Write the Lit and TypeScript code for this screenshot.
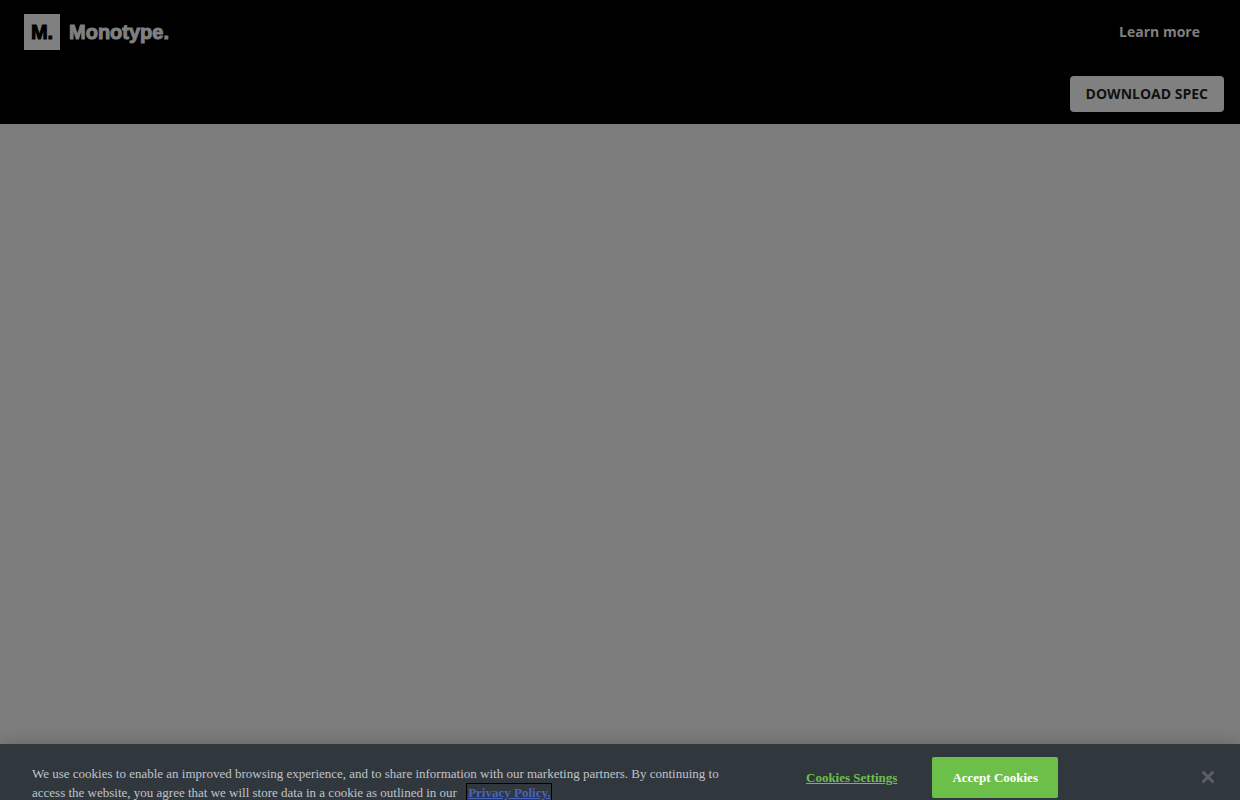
import { LitElement, html, css } from "lit";
import { customElement } from "lit/decorators.js";

@customElement("site-header")
class SiteHeader extends LitElement {
  static styles = css`
    :host {
      display: block;
      background: #000;
      color: #808080;
      font: 700 14px/20px "Open Sans", sans-serif;
    }
    .bar {
      display: flex;
      align-items: center;
      justify-content: space-between;
      height: 64px;
      padding: 0 40px 0 24px;
    }
    .logo {
      display: flex;
      align-items: center;
      gap: 9px;
      color: inherit;
      text-decoration: none;
      font: 700 20px/36px "Liberation Sans", sans-serif;
    }
    .mark {
      width: 36px;
      height: 36px;
      background: #808080;
      color: #000;
      text-align: center;
    }
    .logo span {
      -webkit-text-stroke: 1px currentColor;
    }
    .learn {
      color: inherit;
      text-decoration: none;
    }
    .actions {
      display: flex;
      justify-content: flex-end;
      padding: 12px 16px;
    }
    .download {
      height: 36px;
      padding: 0 16px;
      border: 0;
      border-radius: 4px;
      background: #808080;
      color: #111;
      font: inherit;
    }
  `;

  render() {
    return html`
      <header>
        <nav class="bar">
          <a class="logo" href="#"><span class="mark">M.</span><span>Monotype.</span></a>
          <a class="learn" href="#">Learn more</a>
        </nav>
        <div class="actions"><button class="download">DOWNLOAD SPEC</button></div>
      </header>
    `;
  }
}

@customElement("cookie-banner")
class CookieBanner extends LitElement {
  static styles = css`
    :host {
      display: block;
      background: #30373d;
      box-shadow: 0 0 18px rgba(0, 0, 0, 0.2);
      font: 13px/19px "Liberation Serif", serif;
      color: #c0c4cb;
    }
    .row {
      display: grid;
      grid-template-columns: minmax(0, 704px) auto 1fr;
      align-items: start;
      padding: 0 24px 0 32px;
    }
    p {
      margin: 0;
      padding-top: 20px;
    }
    .policy {
      margin-left: 7px;
      padding: 1px;
      outline: 1px solid #000;
      color: #4864bc;
      font-weight: 700;
    }
    .choices {
      display: flex;
      gap: 17px;
      padding: 13px 0 0 52px;
    }
    button {
      height: 41px;
      border: 0;
      border-radius: 2px;
      background: none;
      font: inherit;
      font-weight: 700;
      white-space: nowrap;
    }
    .settings {
      padding: 0 18px;
      color: #6cc04a;
      text-decoration: underline;
    }
    .accept {
      padding: 0 20px;
      background: #6cc04a;
      color: #fff;
    }
    .close {
      justify-self: end;
      display: flex;
      align-items: center;
      padding: 0 2px;
      margin-top: 12px;
    }
    svg {
      display: block;
      width: 12px;
      height: 12px;
    }
  `;

  render() {
    return html`
      <div class="row">
        <p>
          We use cookies to enable an improved browsing experience, and to share information with
          our marketing partners. By continuing to access the website, you agree that we will store
          data in a cookie as outlined in our <a class="policy" href="#">Privacy Policy.</a>
        </p>
        <div class="choices">
          <button class="settings">Cookies Settings</button>
          <button class="accept">Accept Cookies</button>
        </div>
        <button class="close" aria-label="Close">
          <svg viewBox="0 0 12 12" fill="none" stroke="#5b6065" stroke-width="2.8" stroke-linecap="round">
            <path d="M1.4 1.4 10.6 10.6M10.6 1.4 1.4 10.6" />
          </svg>
        </button>
      </div>
    `;
  }
}

@customElement("app-root")
class AppRoot extends LitElement {
  static styles = css`
    :host {
      display: grid;
      grid-template-rows: auto 1fr 56px;
      height: 100vh;
      overflow: hidden;
      background: #7d7d7d;
    }
  `;

  render() {
    return html`
      <site-header></site-header>
      <main></main>
      <cookie-banner></cookie-banner>
    `;
  }
}
